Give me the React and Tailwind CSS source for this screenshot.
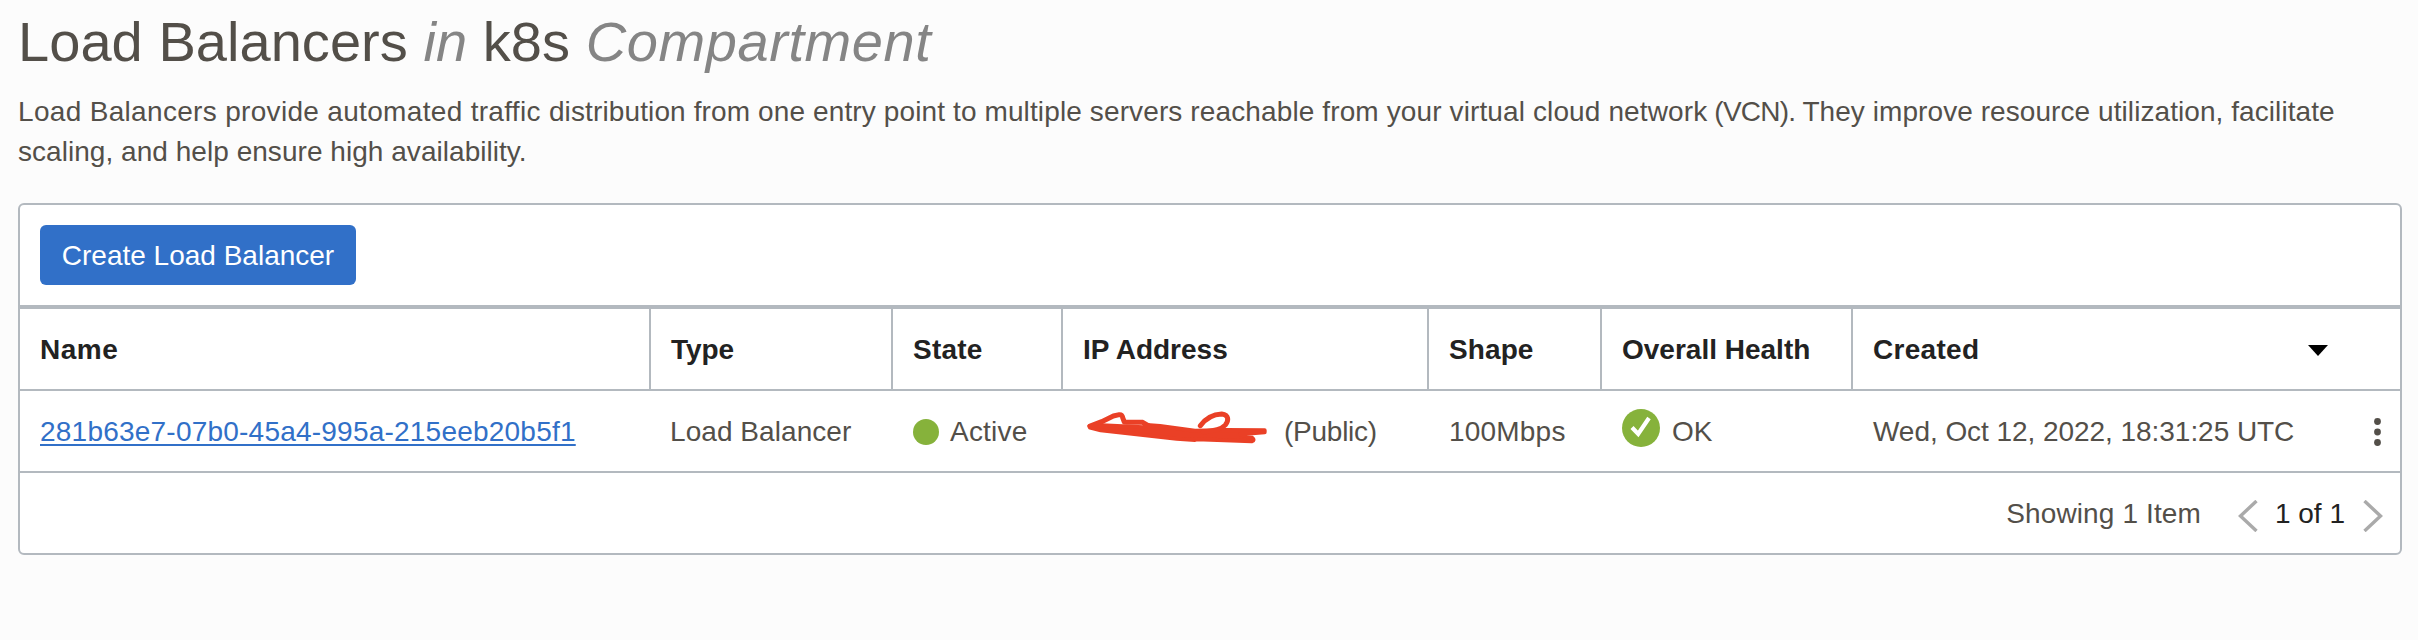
const columns = [
  { label: "Name", cls: "w-[631px] tracking-[0.5px]" },
  { label: "Type", cls: "w-[242px] tracking-[-0.1px]" },
  { label: "State", cls: "w-[170px] tracking-[0.2px]" },
  { label: "IP Address", cls: "w-[366px]" },
  { label: "Shape", cls: "w-[173px] tracking-[0.1px]" },
  { label: "Overall Health", cls: "w-[251px]" },
];

function Scribble() {
  return (
    <svg className="mb-2 h-14 w-[200px] shrink-0" viewBox="0 0 600 168" fill="none" stroke="#ea4026" strokeLinecap="round" strokeLinejoin="round">
      <path d="M28 79L65 76L190 82L200 75L240 78L345 92L440 90L554 91V97L480 103L516 113Q526 120 515 124L350 118L345 120L290 116L62 91L30 83Z" fill="#ea4026" strokeWidth="12" />
      <path d="M30 78L65 65L100 48L118 44Q127 43 128 53L133 66C152 69 170 65 188 67L206 78" strokeWidth="15" />
      <path d="M361 77C378 54 400 43 425 42C448 45 446 62 436 75C425 88 400 93 370 96" strokeWidth="15" />
    </svg>
  );
}

export default function App() {
  return (
    <div className="flex h-[640px] w-[2418px] flex-col bg-[#fcfcfc] px-[18px] font-['Liberation_Sans',Arial,sans-serif] text-[28px] leading-10 text-[#534f49]">
      <h1 className="mt-[10px] h-16 text-[56px] leading-16 tracking-[0.05px] whitespace-nowrap">
        Load Balancers <em className="text-[#858585]">in</em> k8s <em className="tracking-[0.6px] text-[#858585]">Compartment</em>
      </h1>
      <p className="mt-[18px] h-[79px] tracking-[0.12px] whitespace-nowrap">
        <span className="tracking-[0.32px]">Load Balancers provide automated traffic </span>
        distribution from one entry point to multiple servers reachable from your virtual cloud network
        <span className="tracking-[-0.75px]"> (VCN). </span>
        <span className="tracking-[0.07px]">They improve resource utilization, facilitate</span>
        <br />
        <span className="tracking-[0.04px]">scaling, and help ensure high availability.</span>
      </p>
      <section className="mt-8 flex h-[352px] w-[2384px] flex-col rounded-md border-2 border-[#b3b9bf] bg-white whitespace-nowrap">
        <div className="flex h-[104px] items-start border-b-4 border-[#b3b9bf] pt-5 pl-5">
          <button className="h-[60px] w-[316px] rounded-md bg-[#3170c8] pt-0.5 text-white">Create Load Balancer</button>
        </div>
        <div className="flex h-[82px] border-b-2 border-[#b3b9bf] leading-[78px] font-bold text-[#222]">
          {columns.map((c) => (
            <div key={c.label} className={c.cls + " shrink-0 border-r-2 border-[#b3b9bf] pt-0.5 pl-5"}>{c.label}</div>
          ))}
          <div className="flex grow items-center justify-between pt-0.5 pr-[72px] pl-5">
            <span className="tracking-[0.3px]">Created</span>
            <svg className="h-[11px] w-5" viewBox="0 0 20 11"><path d="M0 0H20L10 11Z" fill="#000" /></svg>
          </div>
        </div>
        <div className="flex h-[82px] border-b-2 border-[#b3b9bf] pt-0.5 leading-[78px]">
          <div className="w-[631px] shrink-0 pl-5">
            <a className="tracking-[0.22px] text-[#3170c8] underline decoration-2 underline-offset-[3px]">281b63e7-07b0-45a4-995a-215eeb20b5f1</a>
          </div>
          <div className="w-[242px] shrink-0 pl-[19px] tracking-[0.06px]">Load Balancer</div>
          <div className="flex w-[170px] shrink-0 items-center gap-[11px] pl-5">
            <span className="size-[26px] rounded-full bg-[#86b23b]" />
            <span className="tracking-[0.2px]">Active</span>
          </div>
          <div className="flex w-[366px] shrink-0 items-center pl-[17px]">
            <Scribble />
            <span className="ml-1 tracking-[-0.25px]">(Public)</span>
          </div>
          <div className="w-[173px] shrink-0 pl-5 tracking-[0.2px]">100Mbps</div>
          <div className="flex w-[251px] shrink-0 items-center gap-3 pl-5">
            <svg className="mb-2 size-[38px]" viewBox="0 0 38 38">
              <circle cx="19" cy="19" r="19" fill="#86b23b" />
              <path d="M10 18.5L16.2 25L27 9" fill="none" stroke="#fff" strokeWidth="4.2" />
            </svg>
            <span>OK</span>
          </div>
          <div className="flex grow items-center justify-between pr-[19px] pl-5">
            <span className="tracking-[-0.05px]">Wed, Oct 12, 2022, 18:31:25 UTC</span>
            <svg className="h-7 w-[7px]" viewBox="0 0 7 28" fill="#534f49">
              <circle cx="3.5" cy="3.5" r="3.4" /><circle cx="3.5" cy="14" r="3.4" /><circle cx="3.5" cy="24.5" r="3.4" />
            </svg>
          </div>
        </div>
        <div className="flex h-20 items-center justify-end pt-0.5 pr-[17px] leading-[78px]">
          <span className="mr-[37px] tracking-[0.12px]">Showing 1 Item</span>
          <svg className="mt-1 h-8 w-5" viewBox="0 0 20 32" fill="none" stroke="#aaa" strokeWidth="3.4"><path d="M18.5 1L2.5 16L18.5 31" /></svg>
          <span className="mr-[18px] ml-[17px] text-[#222]">1 of 1</span>
          <svg className="mt-1 h-8 w-5" viewBox="0 0 20 32" fill="none" stroke="#aaa" strokeWidth="3.4"><path d="M1.5 1L17.5 16L1.5 31" /></svg>
        </div>
      </section>
    </div>
  );
}
